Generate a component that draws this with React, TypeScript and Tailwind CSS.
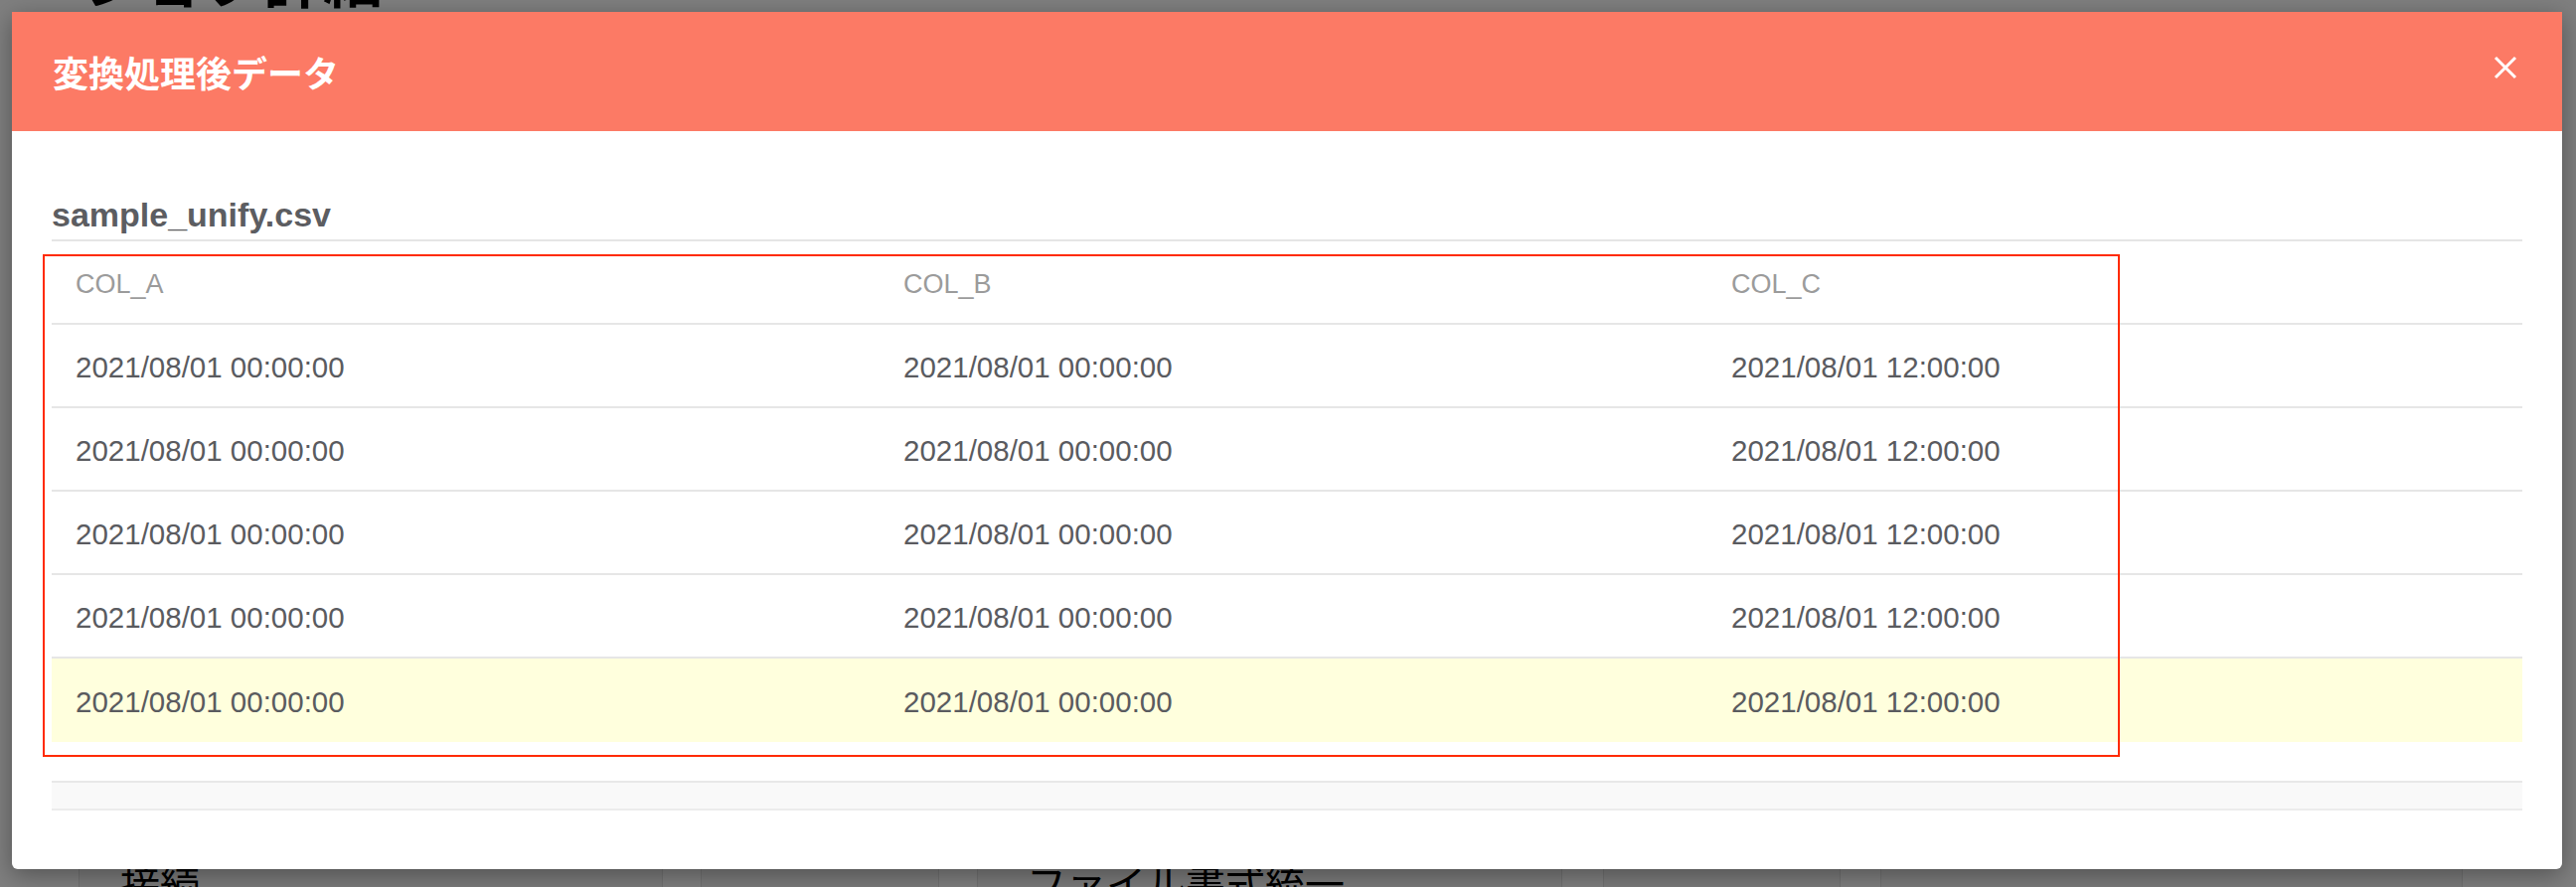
const header = ['COL_A', 'COL_B', 'COL_C'];

const rows = [
  ['2021/08/01 00:00:00', '2021/08/01 00:00:00', '2021/08/01 12:00:00'],
  ['2021/08/01 00:00:00', '2021/08/01 00:00:00', '2021/08/01 12:00:00'],
  ['2021/08/01 00:00:00', '2021/08/01 00:00:00', '2021/08/01 12:00:00'],
  ['2021/08/01 00:00:00', '2021/08/01 00:00:00', '2021/08/01 12:00:00'],
  ['2021/08/01 00:00:00', '2021/08/01 00:00:00', '2021/08/01 12:00:00'],
];

function CloseIcon() {
  return (
    <svg width="24" height="24" viewBox="0 0 24 24" fill="none">
      <path d="M2 2 L22 22 M22 2 L2 22" stroke="white" strokeWidth="3" />
    </svg>
  );
}

export default function App() {
  return (
    <div className="relative h-[893px] w-full overflow-hidden bg-white font-['Liberation_Sans','Noto_Sans_CJK_JP',sans-serif]">
      {/* page behind the dialog */}
      <div className="flex flex-col">
        <h1 className="ml-[85px] mt-[-47px] h-[60px] text-[60px] leading-[60px] font-bold text-black">
          ジョブ詳細
        </h1>
        <div className="h-[846px]" />
        <div className="flex h-[80px] text-[40px] leading-[48px] text-black font-['Noto_Sans_CJK_JP',sans-serif]">
          <div className="w-[79px]" />
          <div className="w-[588px] bg-[#f6f6f6] border-x border-[#e2e2e2] pl-[41px] pt-[5px]">接続</div>
          <div className="w-[38px]" />
          <div className="w-[240px] bg-[#f6f6f6] border-x border-[#e2e2e2]" />
          <div className="w-[38px]" />
          <div className="w-[589px] bg-[#f6f6f6] border-x border-[#e2e2e2] pl-[49px] pt-[5px] whitespace-nowrap overflow-hidden">
            ファイル書式統一
          </div>
          <div className="w-[41px]" />
          <div className="w-[239px] bg-[#f6f6f6] border-x border-[#e2e2e2]" />
          <div className="w-[40px]" />
          <div className="w-[586px] bg-[#f6f6f6] border-x border-[#e2e2e2]" />
        </div>
      </div>

      {/* overlay */}
      <div className="absolute inset-0 bg-black/50" />

      {/* dialog */}
      <div className="absolute left-[12px] top-[12px] flex h-[863px] w-[2566px] flex-col rounded-b-md bg-white shadow-[0_6px_24px_rgba(0,0,0,0.35)]">
        <div className="flex h-[120px] items-center justify-between bg-[#fc7a65] pl-[41px] pr-[45px]">
          <h2 className="text-[36px] font-bold text-white font-['Noto_Sans_CJK_JP',sans-serif]">変換処理後データ</h2>
          <button className="-mt-[8px]">
            <CloseIcon />
          </button>
        </div>

        <div className="flex flex-col px-[40px] pt-[64px]">
          <div className="border-b-2 border-[#e5e5e5] pb-[5px] text-[34px] leading-[40px] font-bold text-[#5c5d61]">
            sample_unify.csv
          </div>

          <div className="grid h-[84px] grid-cols-[833px_833px_1fr] items-center border-b-2 border-[#e6e6e6] pt-[4px] text-[27px] leading-none text-[#9b9b9b]">
            {header.map((h) => (
              <div key={h} className="pl-[24px]">{h}</div>
            ))}
          </div>

          {rows.map((row, i) => {
            const last = i === rows.length - 1;
            return (
              <div
                key={i}
                className={
                  last
                    ? 'grid h-[84px] grid-cols-[833px_833px_1fr] items-center bg-[#ffffdd] pt-[4px] text-[29.5px] leading-none text-[#5a5b5f]'
                    : 'grid h-[84px] grid-cols-[833px_833px_1fr] items-center border-b-2 border-[#e6e6e6] pt-[4px] text-[29.5px] leading-none text-[#5a5b5f]'
                }
              >
                {row.map((c, j) => (
                  <div key={j} className="pl-[24px]">{c}</div>
                ))}
              </div>
            );
          })}

          <div className="mt-[39px] h-[30px] border-y-2 border-t-[#e8e8e8] border-b-[#ececec] bg-[#f9f9f9]" />
        </div>

        {/* annotation box */}
        <div className="pointer-events-none absolute left-[31px] top-[244px] h-[506px] w-[2090px] border-2 border-[#ff2a00]" />
      </div>
    </div>
  );
}
